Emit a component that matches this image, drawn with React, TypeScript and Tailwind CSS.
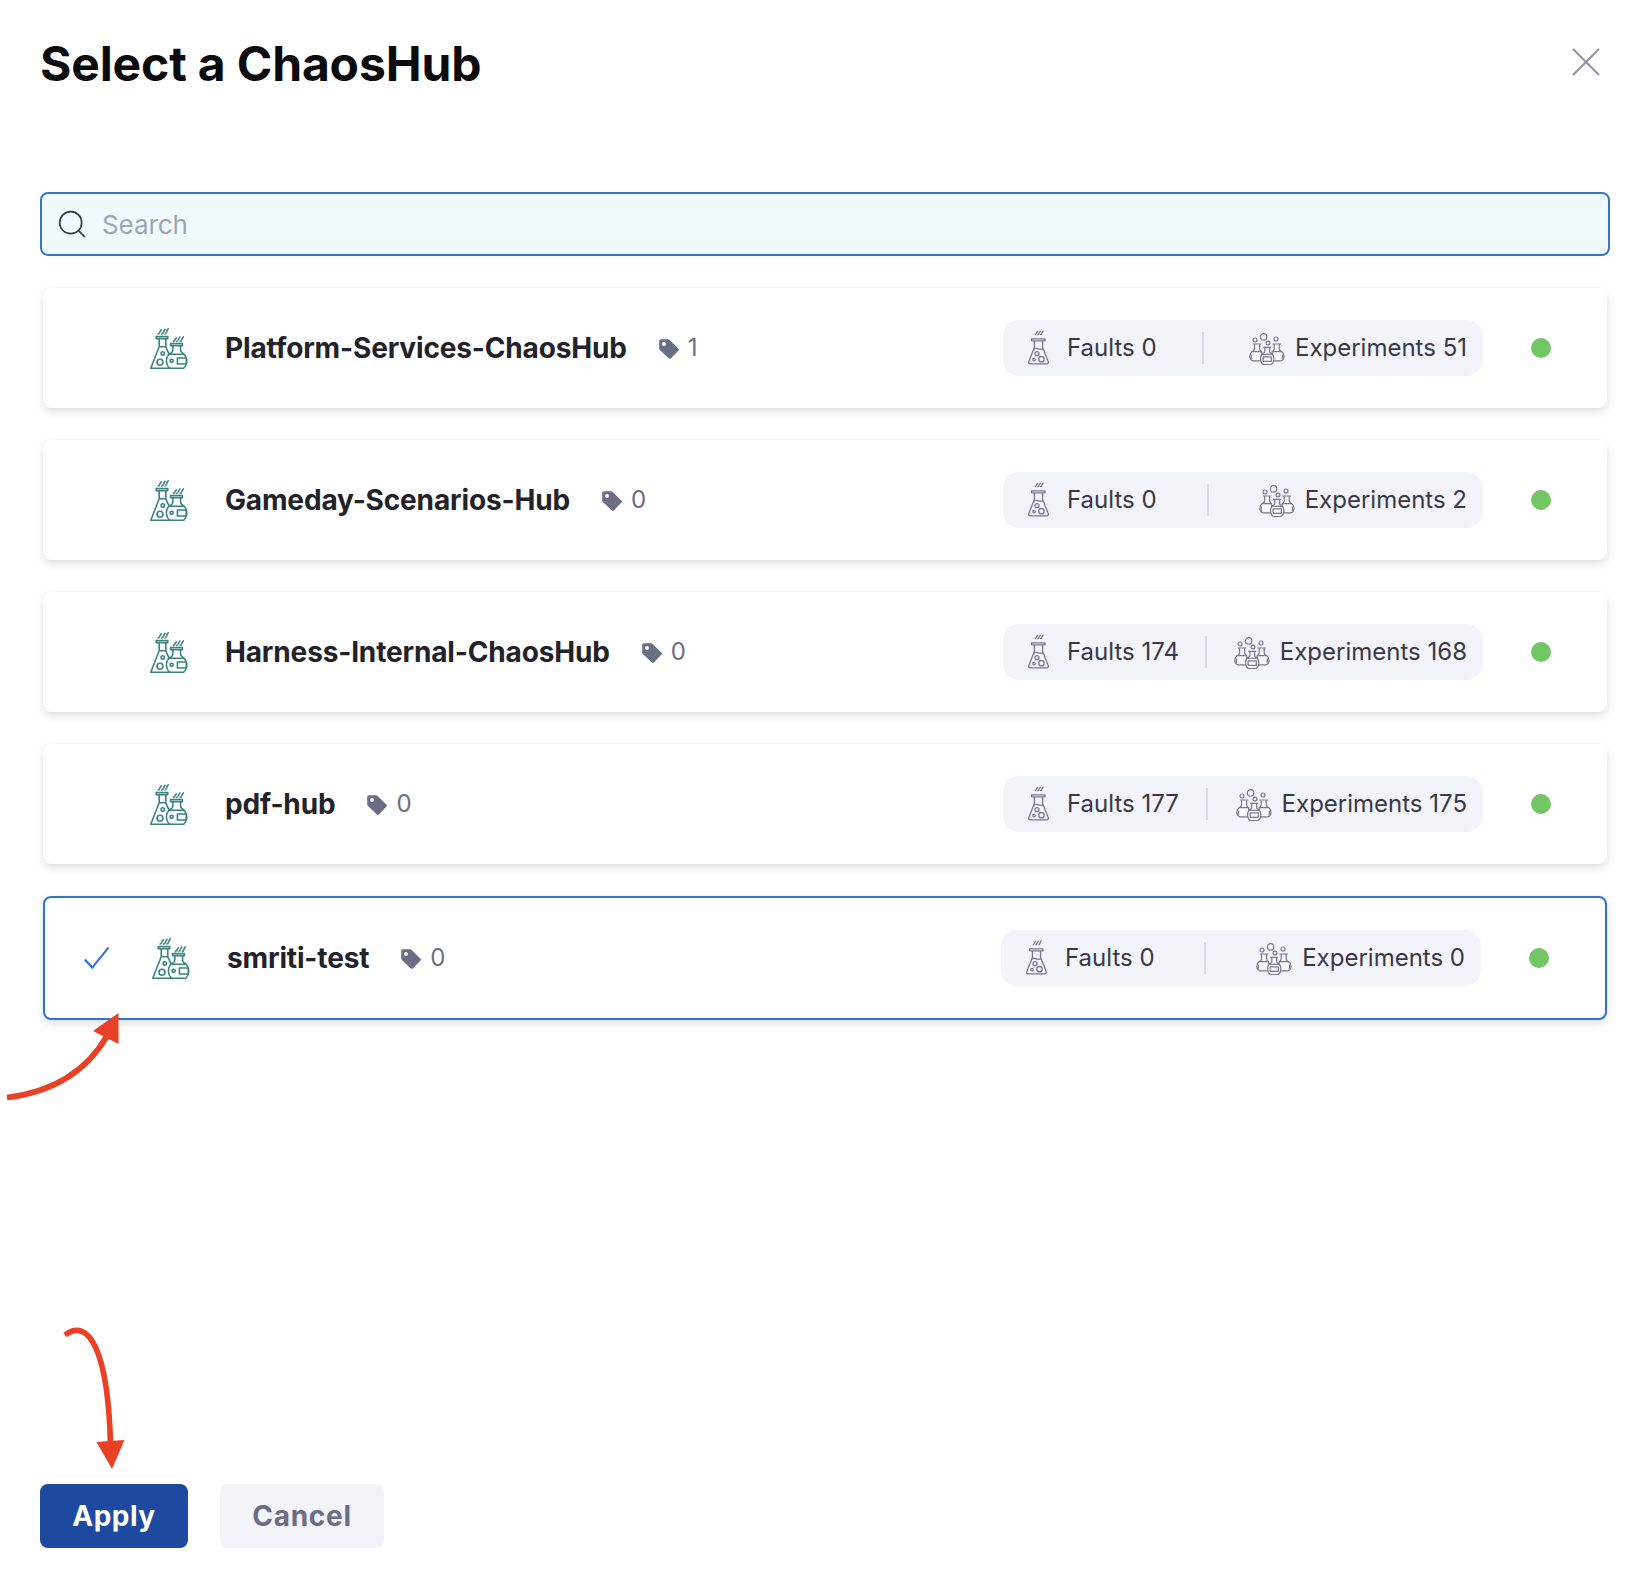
type Hub = { name: string; tags: number; faults: number; experiments: number; selected?: boolean };

const hubs: Hub[] = [
  { name: "Platform-Services-ChaosHub", tags: 1, faults: 0, experiments: 51 },
  { name: "Gameday-Scenarios-Hub", tags: 0, faults: 0, experiments: 2 },
  { name: "Harness-Internal-ChaosHub", tags: 0, faults: 174, experiments: 168 },
  { name: "pdf-hub", tags: 0, faults: 177, experiments: 175 },
  { name: "smriti-test", tags: 0, faults: 0, experiments: 0, selected: true },
];

function HubIcon() {
  return (
    <svg width="38" height="42" viewBox="0 0 38 42" fill="none" stroke="#3a8380" strokeWidth="1.6" strokeLinejoin="round" className="relative top-px shrink-0">
      {/* steam */}
      <path d="M7.600 6.200c3-.2 1.600-3.600 4.400-4.600M11 6.200c3.400-.4 1.800-4 4.600-5.200M14.400 6.200c3.400-.4 1.600-4.400 4.400-5.800" />
      <path d="M22.800 13.600c3-.2 1.600-3.200 4.200-4.200M26.200 13.600c3.400-.4 1.600-3.800 4.200-4.800M29.600 13.600c3.400-.4 1.600-4 4.200-5.200" />
      {/* conical flask */}
      <path d="M6.200 8.600h11.600v2.200H6.200zM9.200 10.800v8L.8 40.300h20M15.800 10.800v8l3.200 7.200M9.200 18.800h6.600" />
      <circle cx="12.800" cy="25.400" r="1.700" />
      <circle cx="10" cy="34.200" r="3" />
      {/* round flask */}
      <path d="M20.600 15.600h11.800v2.200H20.600zM22.800 17.800v4.400c0 2-1.800 2.600-3.400 4M30.600 17.800v4.400c0 2 1.800 2.600 3.400 4M18.800 26.200h15.400c3.400 4 3.400 10.200-.4 14.100H19.400c-3.800-3.900-4-10.100-.6-14.100z" />
      <circle cx="21.600" cy="32.800" r="1.600" />
      <path d="M36.400 30h-9v6h9z" />
    </svg>
  );
}

function FaultIcon() {
  return (
    <svg width="22" height="36" viewBox="0 0 22 36" fill="none" stroke="#777991" strokeWidth="1.300" strokeLinejoin="round" className="shrink-0">
      <path d="M6.600 4.800c2.400-.2 1.200-2.800 3.400-3.700M9.400 4.800c2.400-.2 1.200-3 3.400-3.900M12.200 4.800c2.400-.2 1.200-3 3.400-4.100" />
      <path d="M3.600 8.800h13.400v2H3.600zM6.400 10.800v6.600L.9 31.200c-.6 1.600 0 2.600 1.400 2.600h16.400c1.400 0 2-1 1.400-2.600l-5.500-13.800v-6.600" />
      <path d="M5.400 19.400c3.200-2.800 5.600 1.200 9.800-.6" />
      <circle cx="9" cy="23.700" r="2" />
      <circle cx="6" cy="29.600" r="1.300" />
      <circle cx="13.500" cy="29.200" r="2.700" />
    </svg>
  );
}

function ExperimentsIcon() {
  return (
    <svg width="36" height="33" viewBox="0 0 36 33" fill="none" stroke="#777991" strokeWidth="1.200" strokeLinejoin="round" className="relative top-px shrink-0">
      <circle cx="6" cy="7" r="2" />
      <circle cx="14.600" cy="3.900" r="3.200" />
      <circle cx="19" cy="10" r="1.900" />
      <circle cx="27" cy="6" r="2" />
      <g fill="#f9f9fb">
        <path d="M3.800 11h8.600M5.600 11v5c0 1.400-1.200 1.800-2.400 2.600C-.2 21 0 26 3.600 27.800h9V18.600c-1.200-.8-2-1.200-2-2.600v-5" />
        <path d="M23.400 11H32M30.200 11v5c0 1.400 1.200 1.800 2.400 2.600 3.400 2.400 3.200 7.400-.4 9.200h-9v-9.200c1.200-.8 2-1.200 2-2.600v-5" />
        <path d="M3.200 18.600h9.400M23.200 18.600h9.400" />
        <path d="M2.700 21.600c-.8 1.400-.6 3 .4 4M33.100 21.600c.8 1.400.6 3-.4 4" />
        <path d="M14.200 14.400h8M15.800 14.400v4c0 1.400-1.400 1.600-2.600 2.800-2 2-2.200 6.400-.4 9 .6.900 1.200 1.300 2.200 1.300h6.400c1 0 1.600-.4 2.200-1.300 1.800-2.600 1.600-7-.4-9-1.200-1.200-2.600-1.400-2.600-2.800v-4" />
        <path d="M12.800 21.300h10.800" />
        <rect x="14.100" y="23.900" width="8.200" height="4.400" />
      </g>
    </svg>
  );
}

function TagIcon() {
  return (
    <svg width="20" height="20" viewBox="0 0 20 20" className="relative top-px shrink-0">
      <path fill="#6b6d85" fillRule="evenodd" d="M2 .2h7c.6 0 1 .2 1.400.600l8.900 8.700c.8.800.8 1.500 0 2.300l-7.300 7.400c-.8.800-1.600.800-2.400 0L.9 11.100c-.5-.5-.7-.9-.7-1.600V2C.2.900.9.200 2 .2zM5 3a2 2 0 1 0 0 4 2 2 0 0 0 0-4z" />
    </svg>
  );
}

function HubCard({ hub }: { hub: Hub }) {
  return (
    <div
      className={
        "flex items-center rounded-lg bg-white shadow-[0_0_2px_rgba(40,41,61,0.06),0_4px_8px_rgba(96,97,112,0.18)] " +
        (hub.selected ? "h-[124px] border-2 border-[#3474d0]" : "h-[120px]")
      }
    >
      <div className="flex w-[107px] shrink-0 pl-[39px]">
        {hub.selected && (
          <svg width="26" height="24" viewBox="0 0 26 24" fill="none" stroke="#2f72d4" strokeWidth="2.200">
            <path d="M.8 13.600 8.300 21.600 24.400 1.600" />
          </svg>
        )}
      </div>
      <HubIcon />
      <h2 className="ml-[37px] text-[28px] leading-9 font-[650] tracking-[-0.15px] text-[#22222a]">{hub.name}</h2>
      <div className="ml-8 flex items-center gap-[9px] text-2xl text-[#6b6d85]">
        <TagIcon />
        <span>{hub.tags}</span>
      </div>
      <div className="ml-auto flex h-14 w-[480px] shrink-0 items-center justify-between rounded-2xl bg-[#f3f3fa] pr-4 pl-[25px] text-2xl text-[#383946]">
        <div className="flex items-center gap-4">
          <FaultIcon />
          <span className="pl-px">Faults {hub.faults}</span>
        </div>
        <div className="h-8 w-0.5 bg-[#d9dae5]" />
        <div className="flex items-center gap-2.5">
          <ExperimentsIcon />
          <span>Experiments {hub.experiments}</span>
        </div>
      </div>
      <div className="mr-14 ml-12 size-5 shrink-0 rounded-full bg-[#72c664]" />
    </div>
  );
}

export default function App() {
  return (
    <main className="relative flex h-[1576px] w-[1641px] flex-col bg-white pr-[31px] pb-7 pl-10 font-['Inter',sans-serif]">
      <header className="flex h-[192px] items-start justify-between pt-[34px]">
        <h1 className="text-5xl leading-[60px] font-[650] tracking-[-0.14px] text-[#0b0b0d]">Select a ChaosHub</h1>
        <svg width="28" height="28" viewBox="0 0 28 28" fill="none" stroke="#9091a6" strokeWidth="2" className="mt-[13.5px] mr-2.5">
          <path d="M1 1l26 26M27 1L1 27" />
        </svg>
      </header>

      <label className="flex h-16 items-center rounded-lg border-2 border-[#3474d0] bg-[#f0fafd] pl-4">
        <svg width="28" height="28" viewBox="0 0 28 28" fill="none" stroke="#383946" strokeWidth="1.700">
          <circle cx="12.700" cy="12.700" r="11" />
          <path d="M20.500 20.500l6.300 6.300" />
        </svg>
        <input placeholder="Search" className="ml-4 flex-1 bg-transparent text-[26px] tracking-[-0.1px] outline-none placeholder:text-[#9ba6b5]" />
      </label>

      <section className="mt-8 flex flex-col gap-8 px-[3px]">
        {hubs.map((hub) => (
          <HubCard key={hub.name} hub={hub} />
        ))}
      </section>

      <footer className="mt-auto flex gap-8">
        <button className="h-16 w-[148px] rounded-lg bg-[#1d4a9f] text-[28px] font-bold tracking-[0.5px] text-white">Apply</button>
        <button className="h-16 w-[164px] rounded-lg bg-[#f3f3fa] text-[28px] font-bold tracking-[0.7px] text-[#6b6d85]">Cancel</button>
      </footer>

      {/* annotation arrows */}
      <svg width="130" height="100" viewBox="0 0 130 100" className="pointer-events-none absolute top-[1010px] left-0">
        <path d="M7 87.500C53 82 86 62 107 26" fill="none" stroke="#ea4025" strokeWidth="5.600" />
        <path d="M118.500 3v31L93 21z" fill="#ea4025" />
      </svg>
      <svg width="80" height="150" viewBox="0 0 80 150" className="pointer-events-none absolute top-[1322px] left-[55px]">
        <path d="M10 13C34-5 53 29 55.500 122" fill="none" stroke="#ea4025" strokeWidth="5.600" />
        <path d="M41.500 120l28-2L57 147z" fill="#ea4025" />
      </svg>
    </main>
  );
}
